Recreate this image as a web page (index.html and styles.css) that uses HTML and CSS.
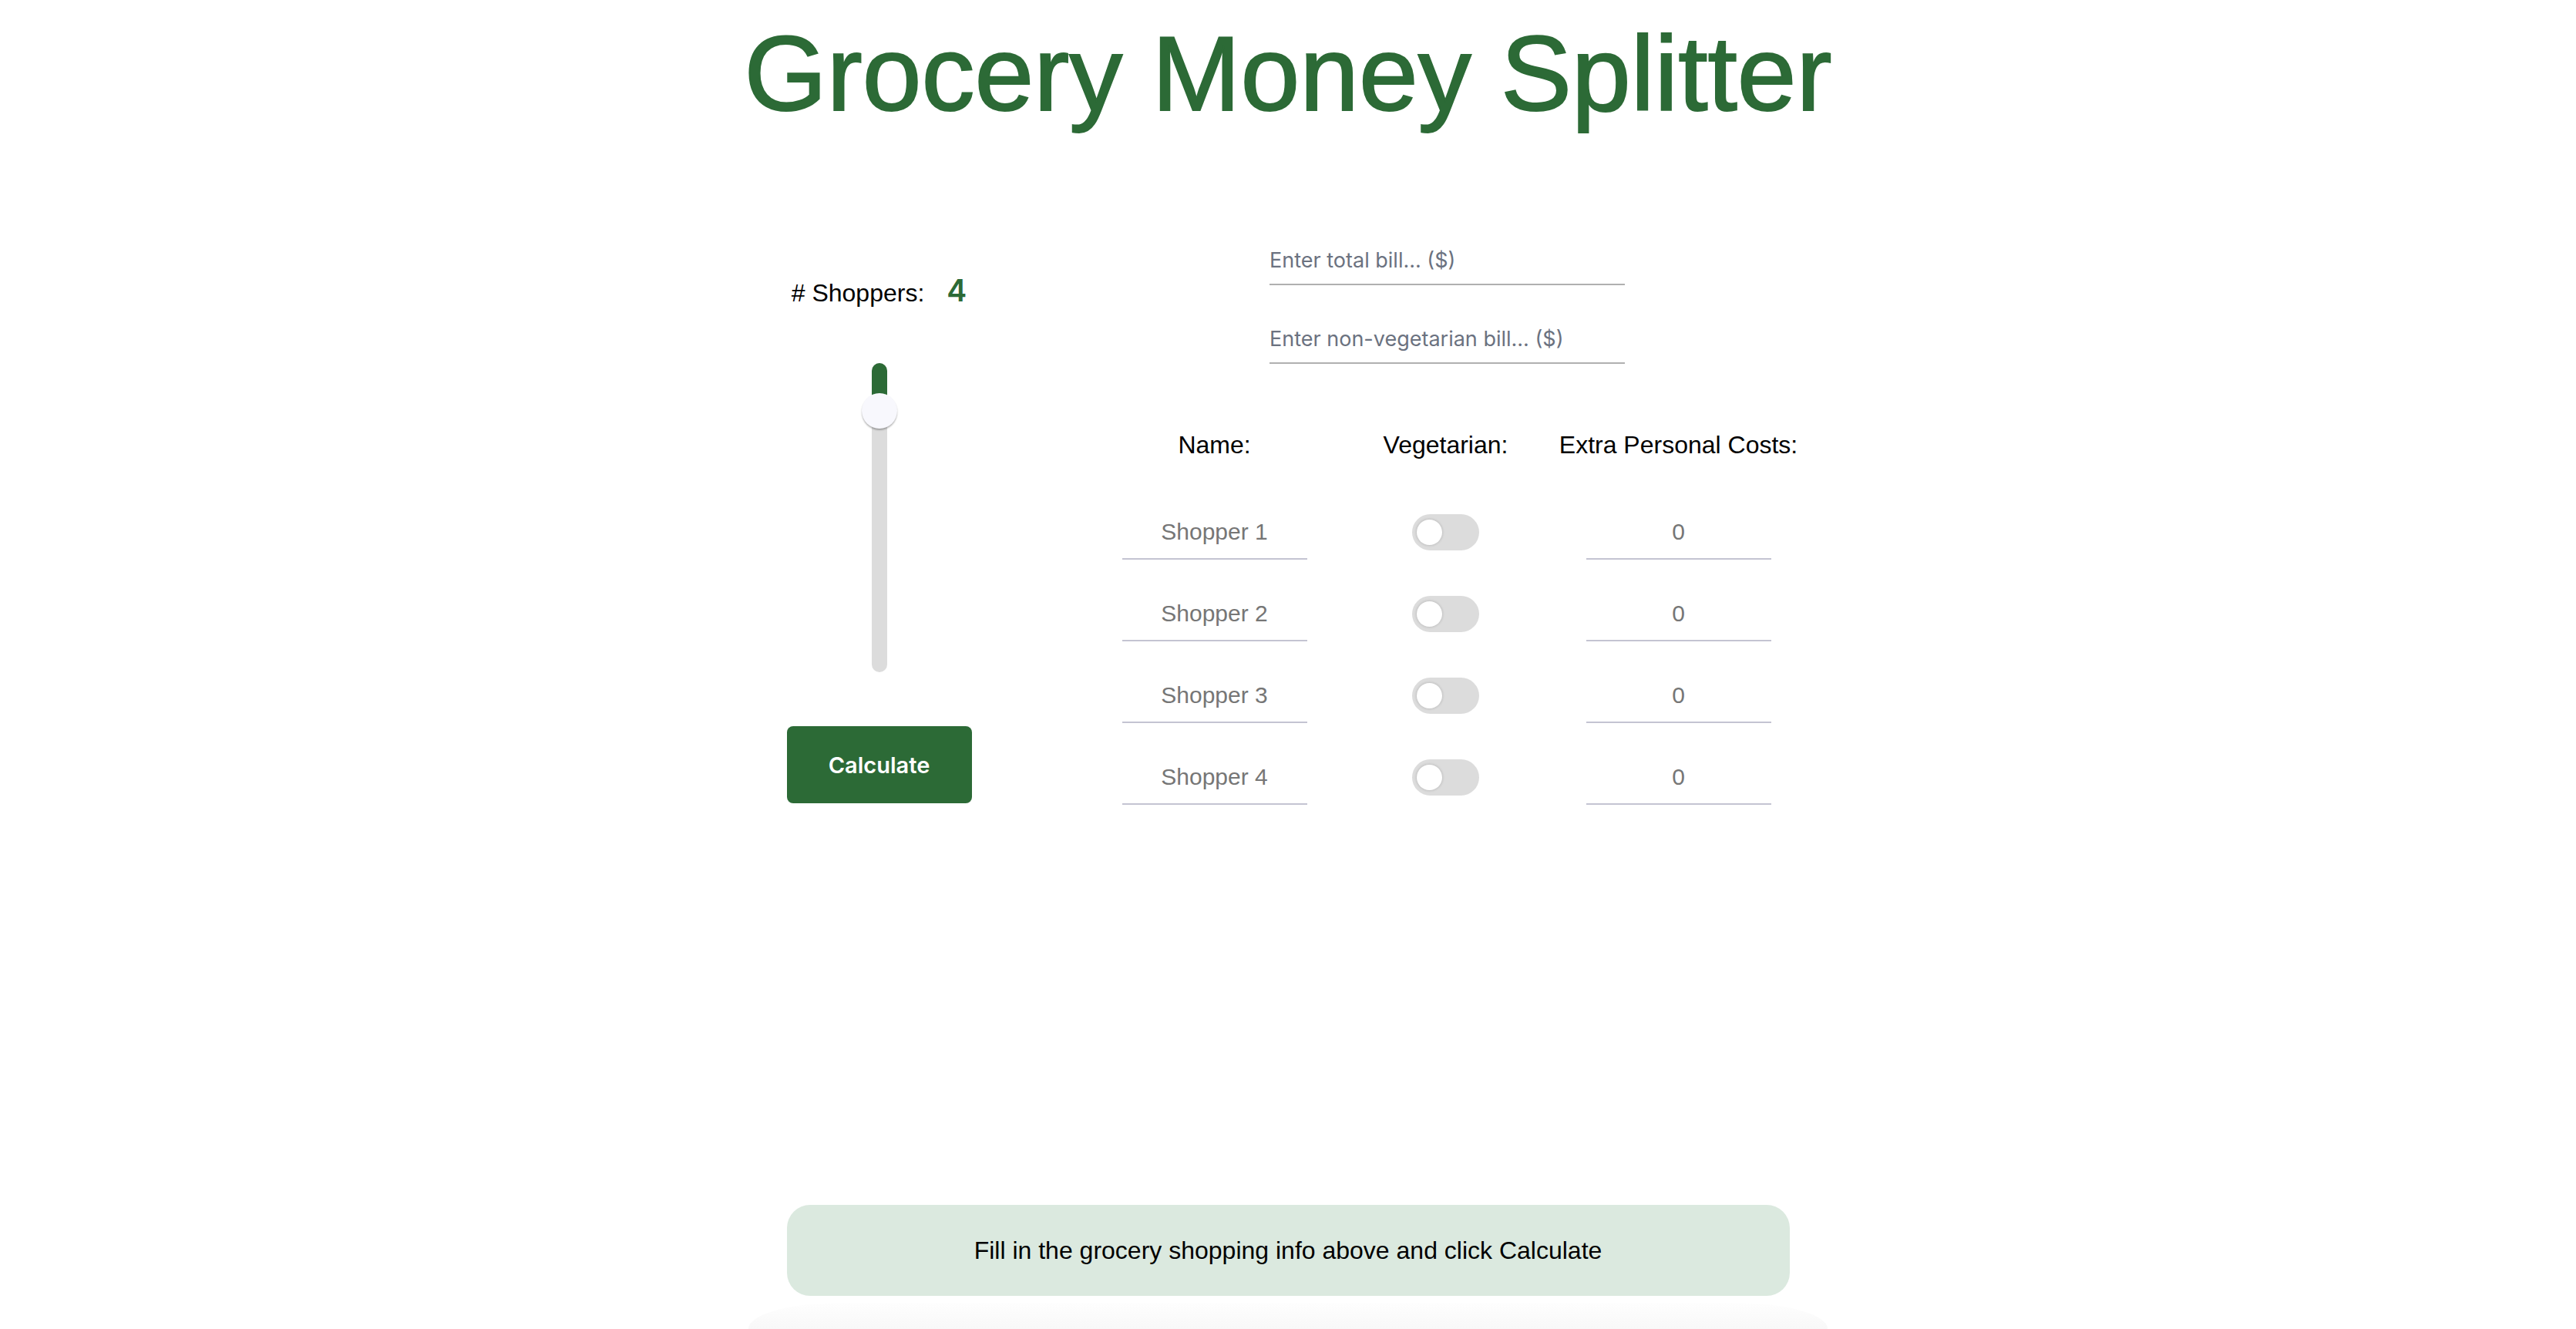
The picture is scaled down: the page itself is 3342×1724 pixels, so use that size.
FILE: index.html
```html
<!DOCTYPE html>
<html lang="en">
<head>
<meta charset="utf-8">
<title>Grocery Money Splitter</title>
<link rel="stylesheet" href="styles.css">
</head>
<body>
<h1 class="title">Grocery Money Splitter</h1>
<main class="app">
  <section class="controls">
    <div class="count-row">
      <span class="count-label"># Shoppers:</span>
      <span class="count-value">4</span>
    </div>
    <div class="slider" role="slider" aria-orientation="vertical" aria-valuemin="2" aria-valuemax="20" aria-valuenow="4">
      <div class="slider-track">
        <div class="slider-fill" style="height: 62px"></div>
      </div>
      <div class="slider-thumb" style="top: 39px"></div>
    </div>
    <button class="calc-btn" type="button">Calculate</button>
  </section>
  <section class="bill-form">
    <div class="bills">
      <input class="bill-input" type="text" placeholder="Enter total bill... ($)">
      <input class="bill-input" type="text" placeholder="Enter non-vegetarian bill... ($)">
    </div>
    <div class="table-head">
      <div class="head-cell">Name:</div>
      <div class="head-cell">Vegetarian:</div>
      <div class="head-cell">Extra Personal Costs:</div>
    </div>
    <div class="table-body">
      <div class="cell"><input class="row-input" type="text" placeholder="Shopper 1"></div>
      <div class="cell"><span class="toggle" role="switch" aria-checked="false"><span class="knob"></span></span></div>
      <div class="cell"><input class="row-input" type="text" placeholder="0"></div>

      <div class="cell"><input class="row-input" type="text" placeholder="Shopper 2"></div>
      <div class="cell"><span class="toggle" role="switch" aria-checked="false"><span class="knob"></span></span></div>
      <div class="cell"><input class="row-input" type="text" placeholder="0"></div>

      <div class="cell"><input class="row-input" type="text" placeholder="Shopper 3"></div>
      <div class="cell"><span class="toggle" role="switch" aria-checked="false"><span class="knob"></span></span></div>
      <div class="cell"><input class="row-input" type="text" placeholder="0"></div>

      <div class="cell"><input class="row-input" type="text" placeholder="Shopper 4"></div>
      <div class="cell"><span class="toggle" role="switch" aria-checked="false"><span class="knob"></span></span></div>
      <div class="cell"><input class="row-input" type="text" placeholder="0"></div>
    </div>
  </section>
</main>
<div class="result">Fill in the grocery shopping info above and click Calculate</div>
<div class="result-shadow"></div>
</body>
</html>
```
FILE: styles.css
```css
html, body {
  margin: 0;
  padding: 0;
  background: #ffffff;
}

body {
  font-family: "Liberation Sans", Arial, Helvetica, sans-serif;
  color: #000000;
  overflow: hidden;
  height: 1724px;
}

.title {
  margin: 16px 0 0;
  font-size: 138px;
  font-weight: 400;
  line-height: normal;
  text-align: center;
  color: #2c6a36;
  -webkit-text-stroke: 2px #2c6a36;
}

.app {
  width: 1301px;
  margin: 143px auto 0;
  display: flex;
  align-items: flex-start;
}

/* left column */
.controls {
  width: 240px;
  flex: 0 0 240px;
  display: flex;
  flex-direction: column;
  align-items: center;
}

.count-row {
  margin-top: 35px;
  display: flex;
  align-items: baseline;
  gap: 29px;
}

.count-label {
  font-size: 32px;
}

.count-value {
  font-family: Inter, "Noto Sans", sans-serif;
  font-weight: 600;
  font-size: 39px;
  color: #2c6a36;
}

.slider {
  position: relative;
  margin-top: 71px;
  width: 46px;
  height: 401px;
  display: flex;
  justify-content: center;
}

.slider-track {
  width: 20px;
  height: 100%;
  border-radius: 10px;
  background: #dcdcdc;
  overflow: hidden;
}

.slider-fill {
  width: 100%;
  background: #2c6a36;
}

.slider-thumb {
  position: absolute;
  left: 0;
  width: 46px;
  height: 46px;
  border-radius: 50%;
  background: #f8f8fd;
  box-shadow: 0 2px 2px rgba(0, 0, 0, 0.28);
}

.calc-btn {
  margin-top: 70px;
  width: 240px;
  height: 100px;
  border: none;
  border-radius: 8px;
  background: #2c6a36;
  color: #ffffff;
  font-family: Inter, "Noto Sans", sans-serif;
  font-weight: 600;
  font-size: 29px;
  padding: 0;
}

/* right column */
.bill-form {
  margin-left: 166px;
  width: 902px;
  flex: 0 0 902px;
}

.bills {
  display: flex;
  flex-direction: column;
  align-items: center;
  gap: 50px;
}

.bill-input {
  width: 461px;
  box-sizing: border-box;
  height: 52px;
  padding: 2px 0 14px;
  border: none;
  border-bottom: 2px solid #b0b0b0;
  outline: none;
  background: transparent;
  font-family: Inter, "Noto Sans", sans-serif;
  font-size: 27px;
  line-height: 34px;
  color: #374151;
}

.bill-input::placeholder {
  color: #6b7280;
}

.table-head {
  margin-top: 87px;
  display: grid;
  grid-template-columns: 298px 302px 302px;
}

.head-cell {
  display: flex;
  justify-content: center;
  white-space: nowrap;
  font-size: 32px;
  line-height: 37px;
}

.table-body {
  margin-top: 70px;
  display: grid;
  grid-template-columns: 298px 302px 302px;
  grid-auto-rows: 60px;
  row-gap: 46px;
}

.cell {
  display: flex;
  justify-content: center;
  align-items: flex-start;
}

.row-input {
  width: 240px;
  box-sizing: border-box;
  height: 60px;
  padding: 6px 0 16px;
  border: none;
  border-bottom: 2px solid #c4c4d2;
  outline: none;
  background: transparent;
  text-align: center;
  font-family: "Liberation Sans", Arial, sans-serif;
  font-size: 30px;
  line-height: 36px;
  color: #444444;
}

.row-input::placeholder {
  color: #767676;
}

.toggle {
  margin-top: 1px;
  width: 87px;
  height: 47px;
  border-radius: 24px;
  background: #dcdcdc;
  display: flex;
  align-items: center;
  padding-left: 6px;
  box-sizing: border-box;
}

.knob {
  width: 33px;
  height: 33px;
  border-radius: 50%;
  background: #ffffff;
  box-shadow: 0 0 3px 1px rgba(0, 0, 0, 0.12);
}

/* result */
.result {
  width: 1301px;
  height: 118px;
  margin: 519px auto 0;
  border-radius: 30px;
  background: #dbe9df;
  display: flex;
  align-items: center;
  justify-content: center;
  font-size: 32px;
}

.result-shadow {
  width: 1400px;
  height: 34px;
  margin: 9px auto 0;
  border-radius: 140px 140px 0 0 / 40px 40px 0 0;
  background: linear-gradient(to bottom, #fefefe, #f8f8f8);
}
```
